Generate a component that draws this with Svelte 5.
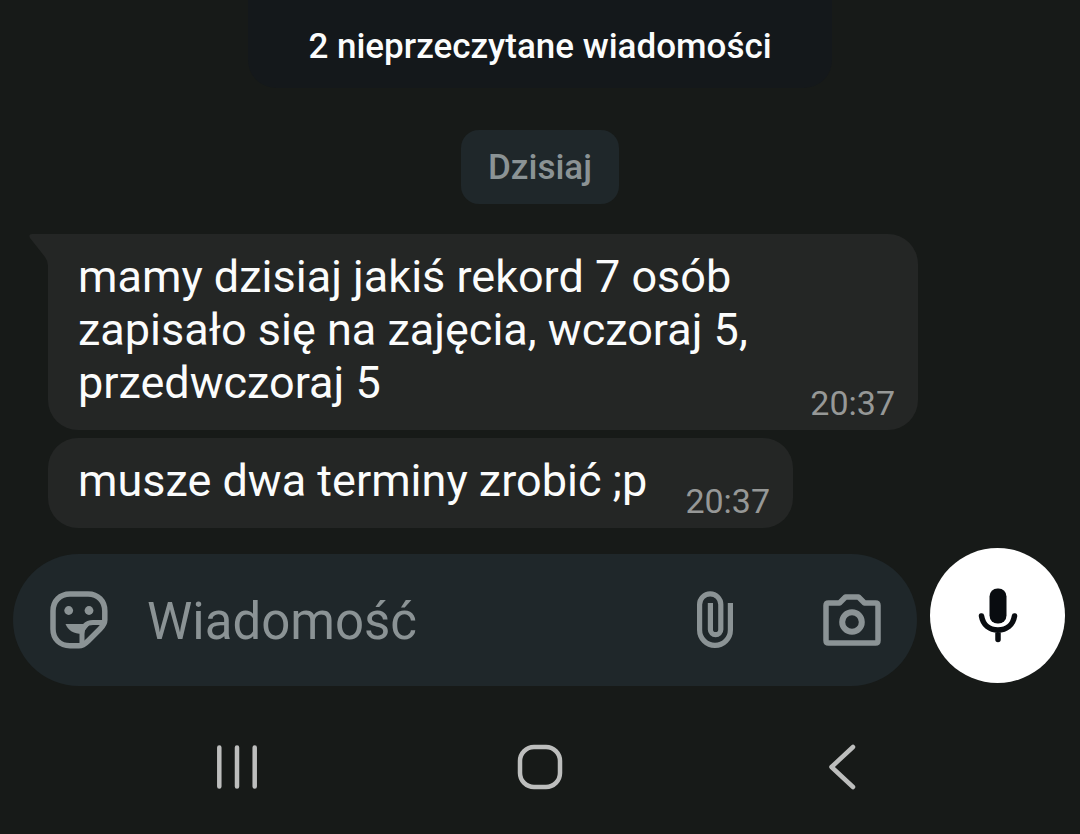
<script>
  const messages = [
    {
      text: 'mamy dzisiaj jakiś rekord 7 osób zapisało się na zajęcia, wczoraj 5, przedwczoraj 5',
      time: '20:37',
      first: true
    },
    { text: 'musze dwa terminy zrobić ;p', time: '20:37', first: false }
  ];
  let draft = $state('');
</script>

<main class="screen">
  <div class="unread">2 nieprzeczytane wiadomości</div>
  <div class="day">Dzisiaj</div>

  <section class="messages" aria-label="Wiadomości">
    {#each messages as m}
      <article class="bubble" class:first={m.first}>
        {#if m.first}
          <svg class="tail" width="22" height="32" viewBox="0 0 22 32" aria-hidden="true">
            <path d="M22 0H4Q0 0 2 4L17 23Q20 27 20 32H22Z" fill="#242625" />
          </svg>
        {/if}
        <p>{m.text}</p>
        <time>{m.time}</time>
      </article>
    {/each}
  </section>

  <form class="composer" onsubmit={(e) => e.preventDefault()}>
    <div class="field">
      <button type="button" aria-label="Naklejki">
        <svg width="58" height="58" viewBox="0 0 58 58" fill="none" stroke="currentColor" stroke-width="5.5" stroke-linejoin="round">
          <path d="M54.8 29V20C54.8 10 48 3 38 3H20C10 3 3 10 3 20V38C3 48 10 54.8 20 54.8H29C33 54.8 35 53 38 50L50 38C53 35 54.8 33 54.8 29Z" />
          <path d="M54 31.5H43C36 31.5 32 36 32 43V54" stroke-width="5" />
          <path d="M15.5 33H40L32 43C24 43 18 39.5 15.5 33Z" fill="currentColor" stroke="none" />
          <circle cx="18.7" cy="19.5" r="4.4" fill="currentColor" stroke="none" />
          <circle cx="39" cy="19.5" r="4.4" fill="currentColor" stroke="none" />
        </svg>
      </button>
      <input type="text" placeholder="Wiadomość" aria-label="Wiadomość" bind:value={draft} />
      <button type="button" aria-label="Załącz">
        <svg width="36" height="58" viewBox="0 0 36 58" fill="none" stroke="currentColor" stroke-width="5.2">
          <path d="M33.4 12V39A15.4 15.4 0 0 1 2.6 39V13.5A10.6 10.6 0 0 1 23.8 13.5V38.5A5.2 5.2 0 0 1 13.4 38.5V12" />
        </svg>
      </button>
      <button type="button" aria-label="Aparat">
        <svg width="58" height="58" viewBox="0 0 58 58" fill="none" stroke="currentColor" stroke-width="5.5" stroke-linejoin="round">
          <path d="M5.5 12H16.5L22.5 6H35.5L41.5 12H52.5Q55 12 55 14.5V49.5Q55 52 52.5 52H5.5Q3 52 3 49.5V14.5Q3 12 5.5 12Z" />
          <circle cx="29" cy="31" r="9.8" stroke-width="6" />
        </svg>
      </button>
    </div>
    <button class="mic" type="button" aria-label="Nagraj wiadomość głosową">
      <svg width="40" height="56" viewBox="0 0 40 56">
        <rect x="11.5" y="0.5" width="17" height="35" rx="8" fill="#090c10" />
        <path d="M3.5 28C5 37 11.5 42 20 42S35 37 36.500 28M20 42V51.500" fill="none" stroke="#090c10" stroke-width="5.5" stroke-linecap="round" />
      </svg>
    </button>
  </form>

  <nav class="system" aria-label="Nawigacja">
    <button type="button" aria-label="Ostatnie">
      <svg width="48" height="48" viewBox="0 0 48 48"><path d="M6.3 4.5V43.5M24 4.5V43.5M41.7 4.5V43.5" /></svg>
    </button>
    <button type="button" aria-label="Ekran główny">
      <svg width="48" height="48" viewBox="0 0 48 48"><rect x="4" y="4" width="40" height="40" rx="14" /></svg>
    </button>
    <button type="button" aria-label="Wstecz">
      <svg width="48" height="48" viewBox="0 0 48 48"><path d="M34 4L12.5 24L34 44" /></svg>
    </button>
  </nav>
</main>

<style>
  :global(body) {
    margin: 0;
    background: #171a18;
  }
  .screen {
    min-height: 100vh;
    box-sizing: border-box;
    display: flex;
    flex-direction: column;
    background: #171a18;
    font-family: Roboto, sans-serif;
    color: #fbfcfc;
  }
  button {
    display: grid;
    place-items: center;
    margin: 0;
    padding: 0;
    border: 0;
    background: none;
    color: inherit;
    flex: none;
  }
  svg {
    display: block;
  }
  .unread {
    align-self: center;
    padding: 25px 60px 19px;
    border-radius: 0 0 28px 28px;
    background: #14181b;
    font-size: 35px;
    line-height: 44px;
    font-weight: 500;
  }
  .day {
    align-self: center;
    margin: 42px 0 30px;
    padding: 16px 27px 14px;
    border-radius: 18px;
    background: #1f272a;
    color: #8b9395;
    font-size: 35px;
    line-height: 44px;
    font-weight: 500;
  }
  .messages {
    display: flex;
    flex-direction: column;
    align-items: flex-start;
    gap: 8px;
    padding: 0 162px 0 48px;
  }
  .bubble {
    position: relative;
    display: flex;
    align-items: flex-end;
    gap: 38px;
    padding: 16px 23px 0 30px;
    border-radius: 30px;
    background: #242625;
  }
  .first {
    align-self: stretch;
    border-top-left-radius: 0;
  }
  .tail {
    position: absolute;
    top: 0;
    left: -20px;
  }
  .bubble p {
    flex: 1;
    margin: 0;
    padding-bottom: 21px;
    font-size: 45px;
    line-height: 53px;
  }
  time {
    padding-bottom: 8px;
    color: #969897;
    font-size: 34px;
    line-height: 38px;
  }
  .composer {
    display: flex;
    align-items: flex-start;
    gap: 13px;
    margin-top: 20px;
    padding: 0 15px 0 13px;
  }
  .field {
    flex: 1;
    min-width: 0;
    display: flex;
    align-items: center;
    height: 132px;
    box-sizing: border-box;
    margin-top: 6px;
    padding: 0 36px 0 37px;
    border-radius: 66px;
    background: #1f272a;
    color: #8b9395;
  }
  .field input {
    flex: 1;
    min-width: 0;
    margin: 0 39px;
    padding: 4px 0 0;
    border: 0;
    outline: 0;
    background: none;
    color: #fbfcfc;
    font: 400 51px/60px Roboto, sans-serif;
  }
  .field input::placeholder {
    color: #8b9395;
    opacity: 1;
  }
  .field button:last-child {
    margin-left: 90px;
  }
  .mic {
    width: 135px;
    height: 135px;
    border-radius: 50%;
    background: #fff;
  }
  .system {
    display: grid;
    grid-template-columns: repeat(3, 1fr);
    margin-top: 57px;
    padding: 0 86px;
    justify-items: center;
  }
  .system svg {
    fill: none;
    stroke: #bdbebd;
    stroke-width: 4.5;
    stroke-linecap: round;
    stroke-linejoin: round;
  }
</style>
